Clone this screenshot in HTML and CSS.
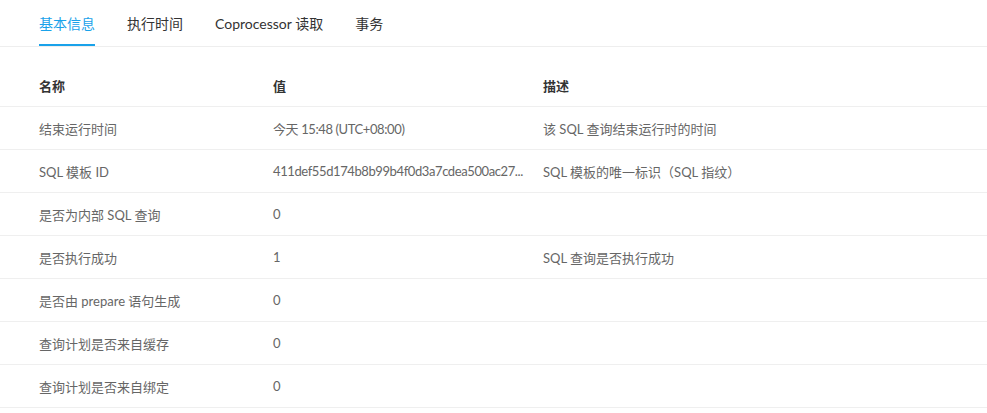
FILE: index.html
```html
<!DOCTYPE html>
<html lang="zh-CN">
<head>
  <meta charset="UTF-8" />
  <meta name="viewport" content="width=device-width, initial-scale=1.0" />
  <title>SQL 详情</title>
  <link rel="stylesheet" href="styles.css">
</head>
<body>
  <div class="tabs">
    <div class="tab active">基本信息</div>
    <div class="tab">执行时间</div>
    <div class="tab">Coprocessor 读取</div>
    <div class="tab">事务</div>
  </div>

  <div class="table">
    <div class="row head">
      <div class="cell">名称</div>
      <div class="cell">值</div>
      <div class="cell">描述</div>
    </div>
    <div class="row">
      <div class="cell">结束运行时间</div>
      <div class="cell value">今天 15:48 (UTC+08:00)</div>
      <div class="cell">该 SQL 查询结束运行时的时间</div>
    </div>
    <div class="row">
      <div class="cell">SQL 模板 ID</div>
      <div class="cell value">411def55d174b8b99b4f0d3a7cdea500ac27...</div>
      <div class="cell">SQL 模板的唯一标识（SQL 指纹）</div>
    </div>
    <div class="row">
      <div class="cell">是否为内部 SQL 查询</div>
      <div class="cell value">0</div>
      <div class="cell"></div>
    </div>
    <div class="row">
      <div class="cell">是否执行成功</div>
      <div class="cell value">1</div>
      <div class="cell">SQL 查询是否执行成功</div>
    </div>
    <div class="row">
      <div class="cell">是否由 prepare 语句生成</div>
      <div class="cell value">0</div>
      <div class="cell"></div>
    </div>
    <div class="row">
      <div class="cell">查询计划是否来自缓存</div>
      <div class="cell value">0</div>
      <div class="cell"></div>
    </div>
    <div class="row">
      <div class="cell">查询计划是否来自绑定</div>
      <div class="cell value">0</div>
      <div class="cell"></div>
    </div>
  </div>
</body>
</html>
```

FILE: styles.css
```css
body {
  margin: 0;
  background: #fff;
  font-family: Lato, "Noto Sans CJK SC", sans-serif;
  color: #666;
}

.tabs {
  display: flex;
  gap: 32px;
  height: 46px;
  padding-left: 39px;
  border-bottom: 1px solid #eee;
}

.tab {
  height: 44px;
  line-height: 48px;
  font-size: 14px;
  color: #333;
  border-bottom: 2px solid transparent;
}

.tab.active {
  color: #19a2ea;
  border-bottom-color: #19a2ea;
}

.table {
  margin-top: 17px;
}

.row {
  display: grid;
  grid-template-columns: 257px 270px 1fr;
  height: 42px;
  align-items: center;
  border-bottom: 1px solid #efefef;
  font-size: 13px;
}

.row.head {
  color: #333;
  font-weight: bold;
}

.cell {
  padding-left: 16px;
  min-width: 0;
  white-space: nowrap;
}

.cell:first-child {
  padding-left: 39px;
}

/* digits run wider than the original font */
.value {
  letter-spacing: -0.4px;
}
```
